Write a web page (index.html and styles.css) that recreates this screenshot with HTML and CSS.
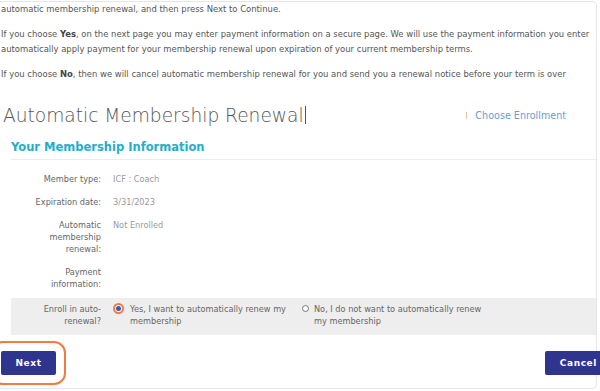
FILE: index.html
```html
<!DOCTYPE html>
<html lang="en">
<head>
<meta charset="utf-8">
<title>Automatic Membership Renewal</title>
<link rel="stylesheet" href="styles.css">
</head>
<body>
<div class="card">
  <div class="intro">
    <p class="cont">automatic membership renewal, and then press Next to Continue.</p>
    <p>If you choose <b>Yes</b>, on the next page you may enter payment information on a secure page. We will use the payment information you enter<br>automatically apply payment for your membership renewal upon expiration of your current membership terms.</p>
    <p>If you choose <b>No</b>, then we will cancel automatic membership renewal for you and send you a renewal notice before your term is over</p>
  </div>
  <div class="title-row">
    <h1 class="title">Automatic Membership Renewal<span class="caret"></span></h1>
    <a class="enroll-link" href="#"><span class="sep"></span>Choose Enrollment</a>
  </div>
  <section class="info">
    <h2 class="info-head">Your Membership Information</h2>
    <div class="rows">
      <div class="row"><div class="label">Member type:</div><div class="value">ICF : Coach</div></div>
      <div class="row"><div class="label">Expiration date:</div><div class="value">3/31/2023</div></div>
      <div class="row"><div class="label">Automatic<br>membership<br>renewal:</div><div class="value">Not Enrolled</div></div>
      <div class="row last"><div class="label">Payment<br>information:</div><div class="value"></div></div>
    </div>
    <div class="row band">
      <div class="label">Enroll in auto-<br>renewal?</div>
      <div class="options">
        <label class="opt yes"><span class="radio checked"><span class="dot"></span></span><span class="opt-text">Yes, I want to automatically renew my<br>membership</span></label>
        <label class="opt no"><span class="radio"></span><span class="opt-text">No, I do not want to automatically renew<br>my membership</span></label>
      </div>
    </div>
  </section>
  <div class="actions">
    <button class="btn next">Next</button>
    <button class="btn cancel">Cancel</button>
  </div>
</div>
</body>
</html>
```

FILE: styles.css
```css
html, body {
  margin: 0;
  padding: 0;
  background: #ffffff;
  overflow: hidden;
}
body {
  width: 600px;
  height: 391px;
  font-family: "DejaVu Sans", "Open Sans", sans-serif;
  color: #5a5a5a;
}
.card {
  margin: 1px 0 0 -10px;
  width: 607px;
  height: 388px;
  border: 1px solid #e6e6e6;
  border-radius: 5px;
  box-sizing: border-box;
}
.intro {
  padding-left: 10px;
}
.intro p {
  margin: 0 0 10px 0;
  font-size: 8.45px;
  line-height: 15px;
  color: #555;
  white-space: nowrap;
}
.intro p b {
  font-weight: bold;
  color: #444;
}
.title-row {
  display: flex;
  align-items: center;
  justify-content: space-between;
  padding: 6px 30px 0 12px;
  height: 34px;
}
.title {
  margin: 0;
  font-size: 18.6px;
  font-weight: 200;
  color: #555;
  display: flex;
  align-items: center;
}
.caret {
  display: inline-block;
  width: 1px;
  height: 18px;
  background: #555;
  margin-left: 1px;
}
.enroll-link {
  display: flex;
  align-items: center;
  font-size: 9.6px;
  color: #6c9bd2;
  text-decoration: none;
}
.sep {
  display: inline-block;
  width: 1px;
  height: 7px;
  background: #e0c49c;
  margin-right: 8px;
}
.info {
  margin: 3px 0 0 20px;
}
.info-head {
  margin: 0;
  padding: 5px 0 5px 0;
  font-size: 11.5px;
  font-weight: bold;
  color: #22aec8;
  border-bottom: 1px solid #ececec;
}
.rows {
  padding-top: 13px;
}
.row {
  display: flex;
  align-items: flex-start;
  font-size: 8.2px;
  line-height: 12px;
  margin-bottom: 11px;
}
.row.last {
  margin-bottom: 8px;
}
.label {
  width: 90px;
  text-align: right;
  color: #666;
  font-weight: 500;
}
.value {
  margin-left: 12px;
  color: #9a9a9a;
}
.band {
  background: #eeeeee;
  padding: 5px 0 7px 0;
  margin: 0;
  height: 37px;
  box-sizing: border-box;
}
.options {
  display: flex;
  margin-left: 12px;
}
.opt {
  display: flex;
  align-items: flex-start;
  color: #666;
}
.opt.yes {
  width: 189px;
}
.radio {
  flex: none;
  width: 7px;
  height: 7px;
  border: 1px solid #777;
  border-radius: 50%;
  background: #fff;
  margin: 2px 6px 0 0;
  box-sizing: border-box;
}
.radio.checked {
  width: 11px;
  height: 11px;
  border: 2px solid #f47a40;
  background: #f47a40;
  margin: 0 6px 0 0;
  display: flex;
  align-items: center;
  justify-content: center;
}
.dot {
  width: 5px;
  height: 5px;
  border-radius: 50%;
  background: #2f59c8;
  box-shadow: 0 0 0 1px #fff;
}
.opt.no .opt-text {
  margin-left: -1px;
}
.actions {
  display: flex;
  justify-content: space-between;
  margin: 16px -16px 0 10px;
}
.btn {
  font-family: "DejaVu Sans", sans-serif;
  font-weight: bold;
  font-size: 9px;
  letter-spacing: 0.6px;
  color: #fff;
  background: #2f348e;
  border: none;
  border-radius: 2px;
  height: 24px;
  padding: 0 15px;
}
.btn.next {
  width: 55px;
  padding: 0;
  outline: 2px solid #f47a40;
  outline-offset: 8px;
}
```
